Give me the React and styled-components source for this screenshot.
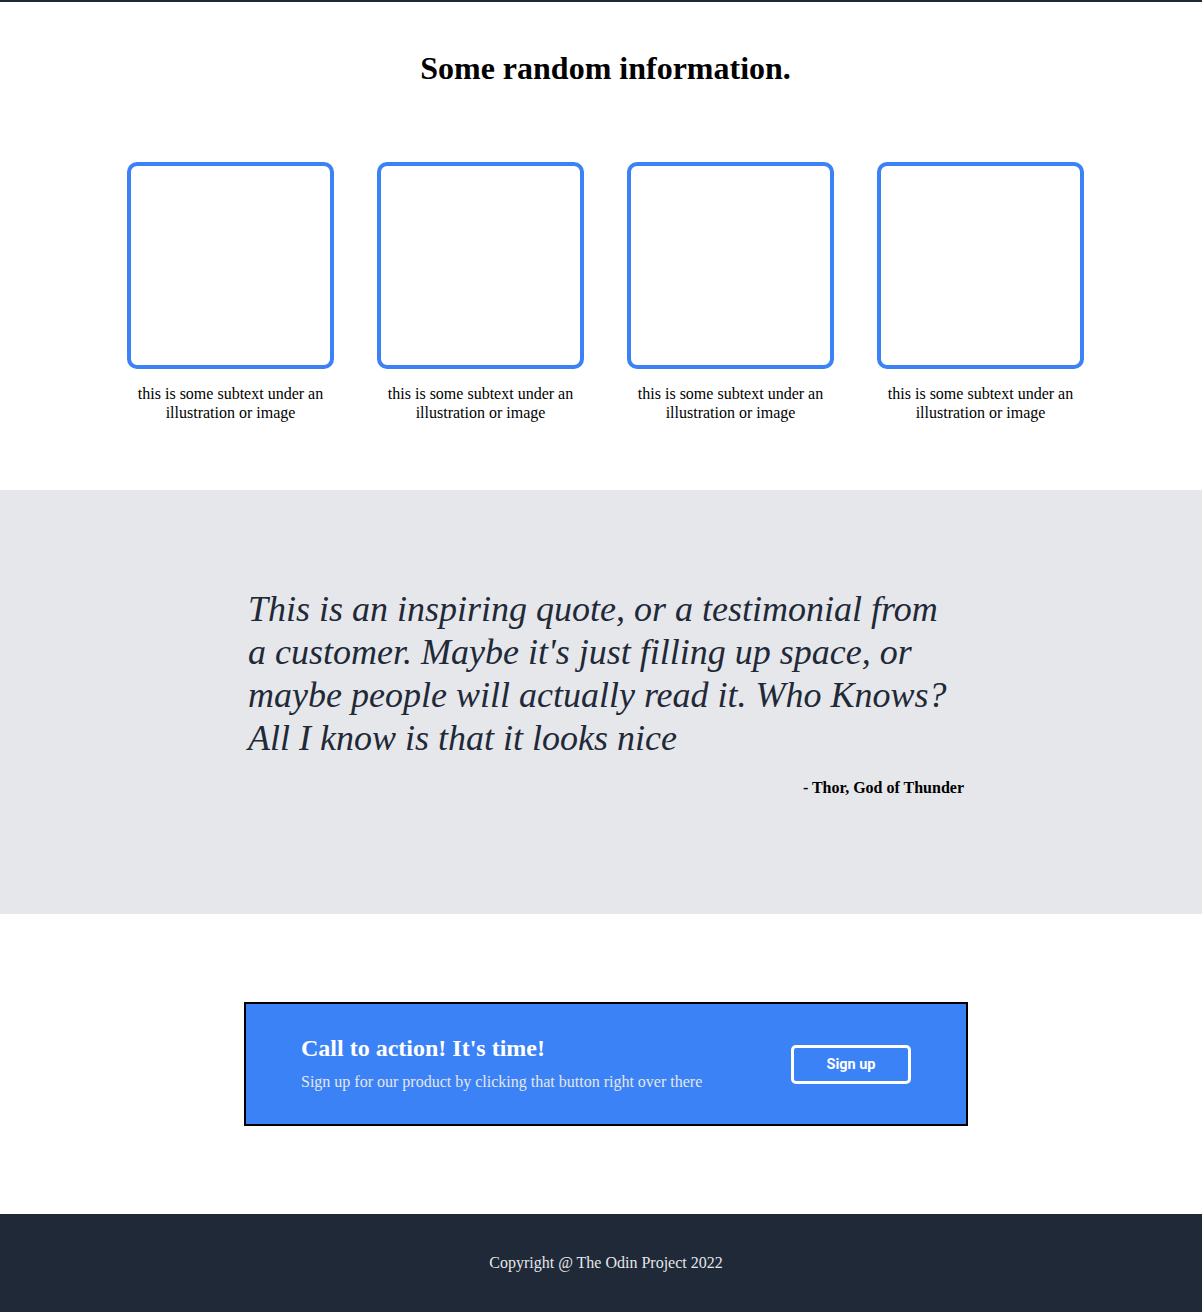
import React from "react";
import styled, { createGlobalStyle } from "styled-components";

const Global = createGlobalStyle`
  html, body { margin: 0; padding: 0; background: #ffffff; }
  body { font-family: "Liberation Serif", "Times New Roman", serif; color: #000; }
  * { box-sizing: border-box; }
`;

const TopLine = styled.div`
  height: 2px;
  background: #1f2937;
`;

const InfoSection = styled.section`
  height: 488px;
  padding: 0 0 0 9px;
  display: flex;
  flex-direction: column;
  align-items: center;
`;

const Heading = styled.h2`
  margin: 46px 0 0;
  font-size: 32px;
  font-weight: bold;
  line-height: 40px;
`;

const Cards = styled.div`
  margin-top: 74px;
  display: flex;
  gap: 43px;
`;

const Card = styled.div`
  width: 207px;
  display: flex;
  flex-direction: column;
  align-items: center;
`;

const Illustration = styled.div`
  width: 207px;
  height: 207px;
  border: 4px solid #3b82f6;
  border-radius: 10px;
`;

const Caption = styled.p`
  margin: 15px 0 0;
  font-size: 16px;
  line-height: 19px;
  text-align: center;
  width: 200px;
`;

const QuoteSection = styled.section`
  height: 424px;
  background: #e5e7eb;
  padding: 0 0 0 10px;
  display: flex;
  justify-content: center;
`;

const QuoteBox = styled.div`
  width: 716px;
  padding: 98px 0 0 0;
  display: flex;
  flex-direction: column;
`;

const QuoteText = styled.p`
  margin: 0;
  font-size: 36px;
  font-style: italic;
  line-height: 43px;
  color: #1f2937;
`;

const Attribution = styled.p`
  margin: 18px 0 0;
  text-align: right;
  font-weight: bold;
  font-size: 16px;
  line-height: 20px;
`;

const CtaSection = styled.section`
  height: 300px;
  padding: 0 0 0 10px;
  display: flex;
  justify-content: center;
  align-items: center;
`;

const CtaBox = styled.div`
  width: 724px;
  height: 124px;
  border: 2px solid #000;
  background: #3b82f6;
  padding: 0 55px;
  display: flex;
  align-items: center;
  justify-content: space-between;
  color: #fff;
`;

const CtaText = styled.div`
  display: flex;
  flex-direction: column;
  padding-bottom: 2px;
`;

const CtaTitle = styled.h3`
  margin: 0;
  font-size: 24px;
  font-weight: bold;
  line-height: 24px;
`;

const CtaSub = styled.p`
  margin: 13px 0 0;
  font-size: 16px;
  line-height: 18px;
  color: #e5e7eb;
`;

const SignUp = styled.button`
  width: 120px;
  height: 39px;
  border: 3px solid #fff;
  border-radius: 5px;
  background: transparent;
  color: #fff;
  font-family: Roboto, "Liberation Sans", sans-serif;
  font-weight: bold;
  font-size: 14.5px;
  cursor: pointer;
`;

const Footer = styled.footer`
  height: 98px;
  background: #1f2937;
  padding: 0 0 0 10px;
  display: flex;
  align-items: center;
  justify-content: center;
  color: #e5e7eb;
  font-size: 16px;
`;

const cards = [1, 2, 3, 4];

export default function App() {
  return (
    <>
      <Global />
      <TopLine />
      <InfoSection>
        <Heading>Some random information.</Heading>
        <Cards>
          {cards.map((c) => (
            <Card key={c}>
              <Illustration />
              <Caption>this is some subtext under an illustration or image</Caption>
            </Card>
          ))}
        </Cards>
      </InfoSection>
      <QuoteSection>
        <QuoteBox>
          <QuoteText>
            This is an inspiring quote, or a testimonial from
            <br />
            a customer. Maybe it's just filling up space, or
            <br />
            maybe people will actually read it. Who Knows?
            <br />
            All I know is that it looks nice
          </QuoteText>
          <Attribution>- Thor, God of Thunder</Attribution>
        </QuoteBox>
      </QuoteSection>
      <CtaSection>
        <CtaBox>
          <CtaText>
            <CtaTitle>Call to action! It's time!</CtaTitle>
            <CtaSub>Sign up for our product by clicking that button right over there</CtaSub>
          </CtaText>
          <SignUp>Sign up</SignUp>
        </CtaBox>
      </CtaSection>
      <Footer>Copyright @ The Odin Project 2022</Footer>
    </>
  );
}
